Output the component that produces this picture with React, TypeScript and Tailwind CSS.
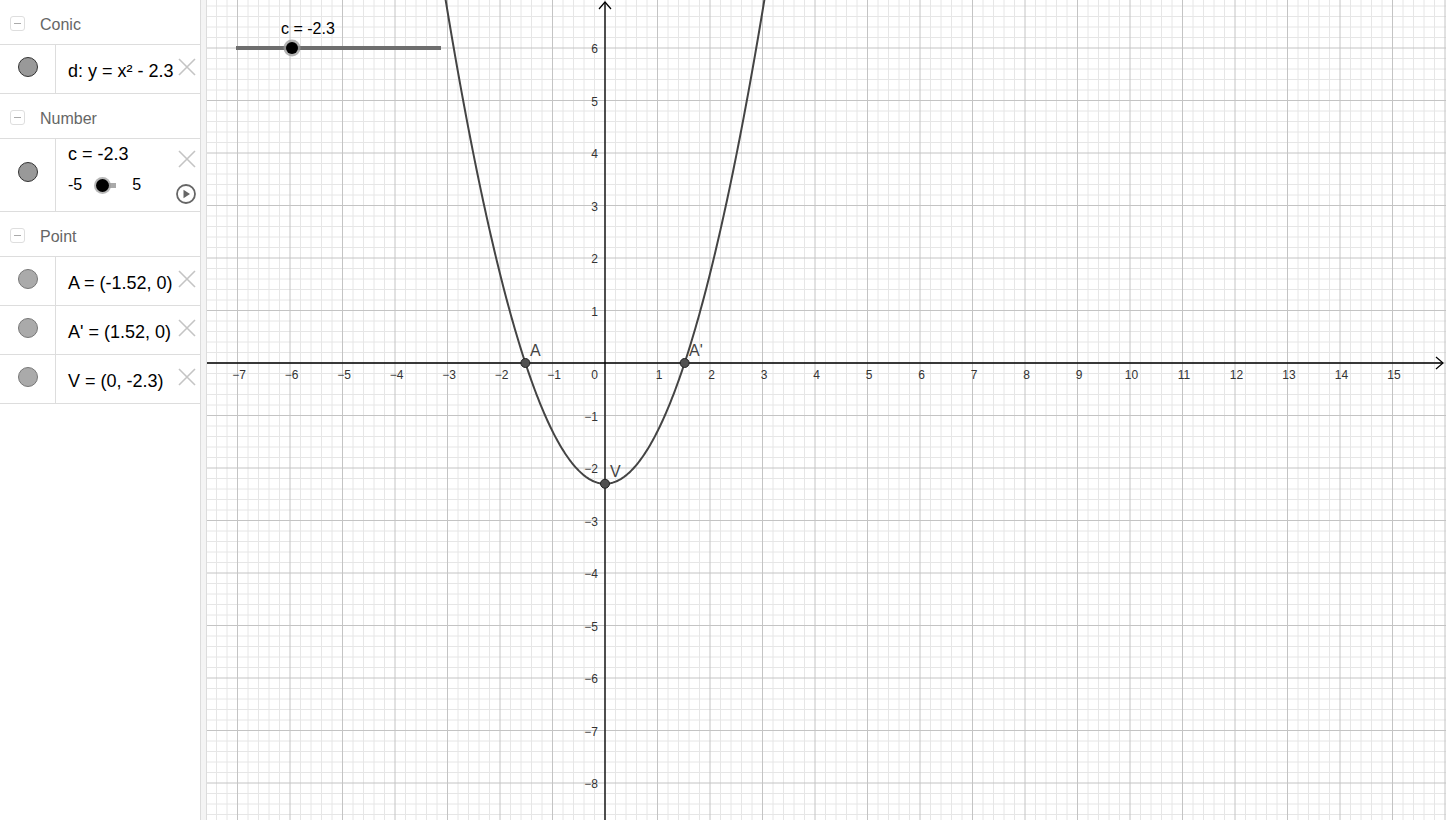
import React from 'react';

const W = 1239;
const H = 820;
const OX = 398; // y-axis, local coords
const OY = 363; // x-axis
const U = 52.5;

const font = { fontFamily: '"Liberation Sans", Arial, sans-serif' };

function CollapseIcon() {
  return (
    <span className="flex h-[15px] w-[15px] items-center justify-center rounded-[3px] border border-[#dedede]">
      <span className="block h-px w-[7px] bg-[#aaa]" />
    </span>
  );
}

function CloseIcon() {
  return (
    <svg width="18" height="18" viewBox="0 0 18 18">
      <path d="M1 1 L17 17 M17 1 L1 17" stroke="#c4c4c4" strokeWidth="1.6" />
    </svg>
  );
}

function PlayIcon() {
  return (
    <svg width="22" height="22" viewBox="0 0 22 22">
      <circle cx="11" cy="11" r="9" fill="none" stroke="#666" strokeWidth="1.8" />
      <path d="M8.5 6.8 L15 11 L8.5 15.2 Z" fill="#666" />
    </svg>
  );
}

function Marker({ kind }: { kind: 'dark' | 'point' }) {
  return kind === 'dark' ? (
    <span className="block h-5 w-5 rounded-full border border-[#333] bg-[#999]" />
  ) : (
    <span className="block h-5 w-5 rounded-full border border-[#777] bg-[#aaa]" />
  );
}

function Header({ label }: { label: string }) {
  return (
    <div className="flex h-[45px] items-center gap-[15px] border-b border-[#dddddd] pl-[10px] pt-[6px]">
      <span className="-mt-[4px]">
        <CollapseIcon />
      </span>
      <span className="text-[16px] text-[#666]">{label}</span>
    </div>
  );
}

function Item({ text, kind }: { text: string; kind: 'dark' | 'point' }) {
  return (
    <div className="flex h-[49px] border-b border-[#dddddd]">
      <div className="flex w-[56px] items-center justify-center border-r border-[#dddddd] pb-[4px]">
        <Marker kind={kind} />
      </div>
      <div className="flex flex-1 items-center whitespace-nowrap pl-3 pt-1 text-[18px] text-black">{text}</div>
      <div className="flex w-[26px] items-start justify-center pt-[13px]">
        <CloseIcon />
      </div>
    </div>
  );
}

function NumberItem() {
  return (
    <div className="flex h-[73px] border-b border-[#dddddd]">
      <div className="flex w-[56px] items-center justify-center border-r border-[#dddddd] pb-[6px]">
        <Marker kind="dark" />
      </div>
      <div className="flex flex-1 flex-col whitespace-nowrap pl-3 pt-[4px]">
        <span className="text-[18px] leading-[22px] text-black">c = -2.3</span>
        <div className="mt-[8px] flex items-center text-[16px] text-black">
          <span>-5</span>
          <span className="relative ml-[12px] flex h-5 w-[28px] items-center">
            <span className="absolute left-[8px] h-[5px] w-[14px] bg-[#aaa]" />
            <span className="absolute left-0 h-[17px] w-[17px] rounded-full bg-[#999]/70" />
            <span className="absolute left-[2px] h-[13px] w-[13px] rounded-full bg-black" />
          </span>
          <span className="ml-[10px]">5</span>
        </div>
      </div>
      <div className="flex w-[26px] flex-col items-center pt-[11px]">
        <CloseIcon />
        <span className="mt-[15px] -ml-[3px]">
          <PlayIcon />
        </span>
      </div>
    </div>
  );
}

function Graphics() {
  const minor: React.ReactNode[] = [];
  const major: React.ReactNode[] = [];
  for (let k = Math.ceil(-OX / (U / 5)); k <= Math.floor((W - OX) / (U / 5)); k++) {
    const x = OX + (k * U) / 5;
    (k % 5 === 0 ? major : minor).push(
      <line key={'x' + k} x1={x} y1={0} x2={x} y2={H} stroke={k % 5 === 0 ? '#c4c4c4' : '#e6e6e6'} strokeWidth={1} />
    );
  }
  for (let k = Math.ceil(-OY / (U / 5)); k <= Math.floor((H - OY) / (U / 5)); k++) {
    const y = OY + (k * U) / 5;
    (k % 5 === 0 ? major : minor).push(
      <line key={'y' + k} x1={0} y1={y} x2={W} y2={y} stroke={k % 5 === 0 ? '#c4c4c4' : '#e6e6e6'} strokeWidth={1} />
    );
  }

  const xLabels: React.ReactNode[] = [];
  for (let i = -7; i <= 15; i++) {
    if (i === 0) continue;
    xLabels.push(
      <text key={'lx' + i} x={OX + i * U + 1.5} y={OY + 16} textAnchor="middle">
        {i < 0 ? '\u2212' + -i : i}
      </text>
    );
  }
  const yLabels: React.ReactNode[] = [];
  for (let j = -8; j <= 6; j++) {
    if (j === 0) continue;
    yLabels.push(
      <text key={'ly' + j} x={OX - 7} y={OY - j * U + 5} textAnchor="end">
        {j < 0 ? '\u2212' + -j : j}
      </text>
    );
  }

  const pts: string[] = [];
  for (let x = -3.2; x <= 3.2001; x += 0.02) {
    pts.push(`${(OX + x * U).toFixed(2)},${(OY - (x * x - 2.3) * U).toFixed(2)}`);
  }
  const r = Math.sqrt(2.3);

  return (
    <svg width={W} height={H} className="block" style={font}>
      <rect width={W} height={H} fill="#fff" />
      {minor}
      {major}
      <line x1={0} y1={OY} x2={W - 3} y2={OY} stroke="#000" strokeWidth={1.3} />
      <line x1={OX} y1={2} x2={OX} y2={H} stroke="#000" strokeWidth={1.3} />
      <path d={`M${W - 10} ${OY - 6} L${W - 3} ${OY} L${W - 10} ${OY + 6}`} fill="none" stroke="#000" strokeWidth={1.2} />
      <path d={`M${OX - 6} 9 L${OX} 2 L${OX + 6} 9`} fill="none" stroke="#000" strokeWidth={1.2} />
      <g fontSize={12} fill="#333">
        {xLabels}
        {yLabels}
        <text x={OX - 7} y={OY + 16} textAnchor="end">0</text>
      </g>
      <polyline points={pts.join(' ')} fill="none" stroke="#444" strokeWidth={2} />
      <g fill="#4f4f4f" stroke="#222" strokeWidth={1}>
        <circle cx={OX - r * U} cy={OY} r={4.5} />
        <circle cx={OX + r * U} cy={OY} r={4.5} />
        <circle cx={OX} cy={OY + 2.3 * U} r={4.5} />
      </g>
      <g fontSize={16} fill="#444">
        <text x={323} y={356}>A</text>
        <text x={482} y={356}>A'</text>
        <text x={403} y={477}>V</text>
      </g>
      <line x1={29} y1={48} x2={234} y2={48} stroke="#6e6e6e" strokeWidth={4} />
      <circle cx={85} cy={48} r={8.5} fill="#999" fillOpacity={0.75} />
      <circle cx={85} cy={48} r={6} fill="#000" />
      <text x={74} y={34} fontSize={16} fill="#000">c = -2.3</text>
    </svg>
  );
}

export default function App() {
  return (
    <div className="flex h-[820px] w-[1446px] overflow-hidden bg-white" style={font}>
      <div className="w-[200px] shrink-0 bg-white">
        <Header label="Conic" />
        <Item text="d: y = x² - 2.3" kind="dark" />
        <Header label="Number" />
        <NumberItem />
        <Header label="Point" />
        <Item text="A = (-1.52, 0)" kind="point" />
        <Item text="A' = (1.52, 0)" kind="point" />
        <Item text="V = (0, -2.3)" kind="point" />
      </div>
      <div className="w-[7px] shrink-0 border-x border-[#dcdcdc] bg-[#f4f4f4]" />
      <div className="flex-1">
        <Graphics />
      </div>
    </div>
  );
}
